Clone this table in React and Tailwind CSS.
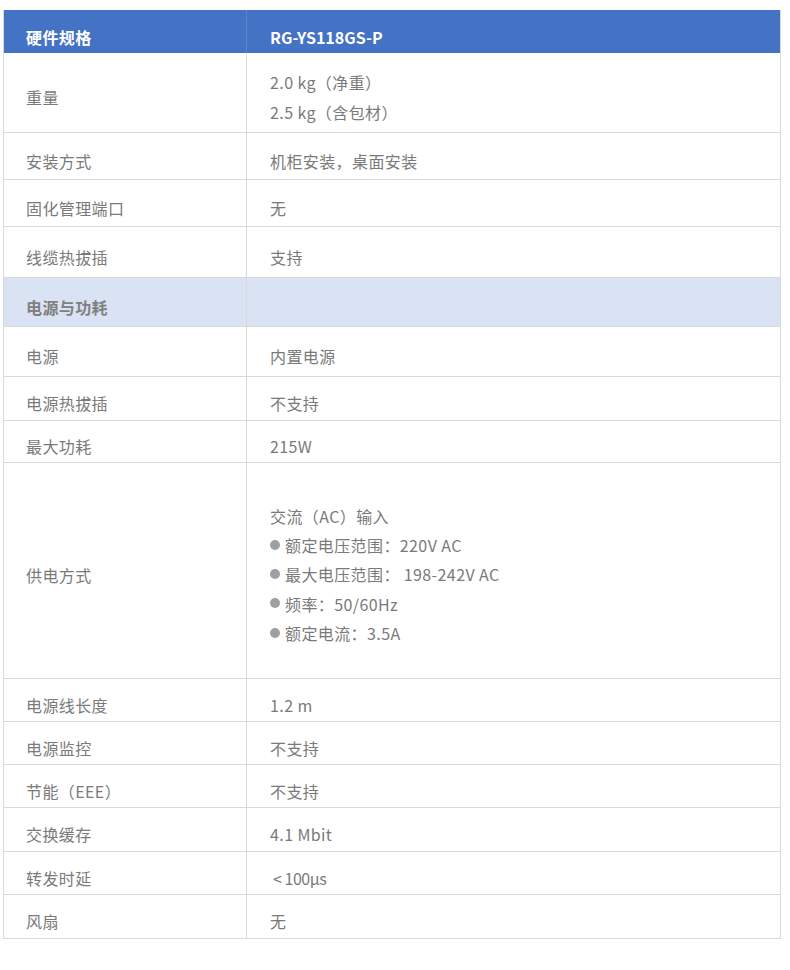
import React from "react";

const font = { fontFamily: '"Noto Sans CJK SC", "Noto Sans", sans-serif' };

function Row({ h, label, children, section }) {
  return (
    <div
      className={`flex border-b border-[#d9d9d9] ${section ? "bg-[#dae3f3] font-bold text-[#808080]" : "text-[#7a7a7a]"}`}
      style={{ height: h }}
    >
      <div className="w-[243px] shrink-0 border-r border-[#d9d9d9] flex items-center pl-[22px] pt-[9px]">
        {label}
      </div>
      <div className="flex-1 flex items-center pl-[23px] pt-[9px]">{children}</div>
    </div>
  );
}

function Bullet({ children }) {
  return (
    <div className="flex items-center">
      <span className="inline-block w-[10px] h-[10px] rounded-full bg-[#a0a0a0] mr-[5px] -mt-[2px]" />
      <span>{children}</span>
    </div>
  );
}

export default function App() {
  return (
    <div className="w-[790px] h-[970px] bg-white" style={font}>
      <div className="pt-[10px] pl-[3px]">
        <div className="w-[778px] border-x border-[#d9d9d9] text-[16px] tracking-[0.4px] leading-[24px]">
          <div className="flex h-[43px] bg-[#4472c4] text-white font-bold">
            <div className="w-[243px] shrink-0 border-r border-[#5b84cc] flex items-center pl-[22px] pt-[11px]">
              硬件规格
            </div>
            <div className="flex-1 flex items-center pl-[23px] pt-[11px] tracking-[0px]">RG-YS118GS-P</div>
          </div>
          <Row h={80} label="重量">
            <div className="leading-[30px]">
              <div>2.0 kg（净重）</div>
              <div>2.5 kg（含包材）</div>
            </div>
          </Row>
          <Row h={47} label="安装方式">机柜安装，桌面安装</Row>
          <Row h={47} label="固化管理端口">无</Row>
          <Row h={51} label="线缆热拔插">支持</Row>
          <Row h={49} label="电源与功耗" section>
            {""}
          </Row>
          <Row h={50} label="电源">内置电源</Row>
          <Row h={44} label="电源热拔插">不支持</Row>
          <Row h={42} label="最大功耗">215W</Row>
          <Row h={216} label="供电方式">
            <div className="leading-[29.3px]">
              <div>交流（AC）输入</div>
              <Bullet>额定电压范围：220V AC</Bullet>
              <Bullet>最大电压范围： 198-242V AC</Bullet>
              <Bullet>频率：50/60Hz</Bullet>
              <Bullet>额定电流：3.5A</Bullet>
            </div>
          </Row>
          <Row h={43} label="电源线长度">1.2 m</Row>
          <Row h={43} label="电源监控">不支持</Row>
          <Row h={43} label="节能（EEE）">不支持</Row>
          <Row h={44} label="交换缓存">4.1 Mbit</Row>
          <Row h={43} label="转发时延">
            <span className="tracking-[-0.5px]">&nbsp;&lt; 100μs</span>
          </Row>
          <Row h={44} label="风扇">无</Row>
        </div>
      </div>
    </div>
  );
}
